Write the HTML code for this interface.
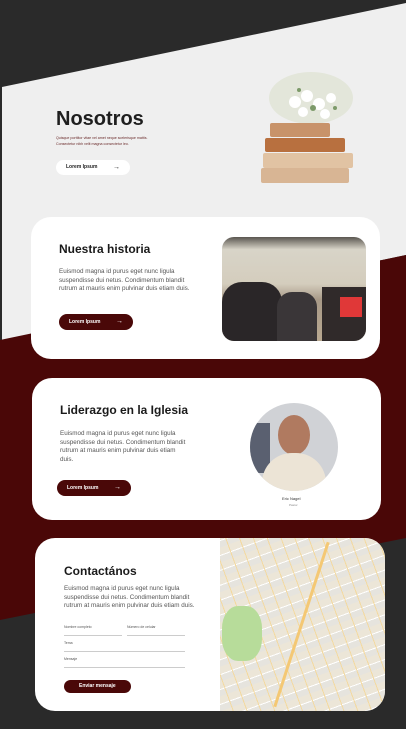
<!DOCTYPE html>
<html><head><meta charset="utf-8"><style>
*{margin:0;padding:0;box-sizing:border-box}
body{width:406px;height:729px;position:relative;overflow:hidden;font-family:"Liberation Sans",sans-serif;background:#2a2a2a}
.abs{position:absolute}
.card{position:absolute;background:#fff;border-radius:20px;overflow:hidden}
h2{font-size:12px;font-weight:bold;color:#1a1a1a}
.p{font-size:6.3px;line-height:8.5px;color:#555}
.btn{position:absolute;height:16px;border-radius:8px;background:#4a0808;color:#fff;font-size:5px;font-weight:bold;line-height:16px;padding-left:10px}
.btn span{position:absolute;right:10px;font-size:7px;top:0}
.field{position:absolute;border-bottom:1px solid #ccc;font-size:3.5px;color:#555;height:11px}
</style></head><body>
<svg class="abs" style="left:0;top:0" width="406" height="729">
<polygon points="0,0 406,0 406,620 0,729" fill="#2a2a2a"/>
<polygon points="2,87 406,3 406,255 2,340" fill="#efefef"/>
<polygon points="0,340 406,255 406,538 0,620" fill="#4a0707"/>
</svg>
<div class="abs" style="left:56px;top:108px;font-size:20px;font-weight:bold;color:#1e1e1e">Nosotros</div>
<div class="abs" style="left:56px;top:136px;font-size:3.6px;line-height:5.5px;color:#6a2a2a">Quisque porttitor vitae vel amet neque scelerisque mattis.<br>Consectetur nibh velit magna consectetur leo.</div>
<div class="abs" style="left:56px;top:160px;width:74px;height:15px;border-radius:8px;background:#fff;font-size:5px;font-weight:bold;line-height:15px;padding-left:10px;color:#222">Lorem Ipsum<span style="position:absolute;right:10px;font-size:7px">→</span></div>
<svg class="abs" style="left:255px;top:60px" width="112" height="135">
<ellipse cx="56" cy="38" rx="42" ry="26" fill="#e3e6da"/>
<g fill="#fff"><circle cx="40" cy="42" r="6"/><circle cx="52" cy="36" r="6"/><circle cx="64" cy="44" r="6"/><circle cx="76" cy="38" r="5"/><circle cx="48" cy="52" r="5"/><circle cx="70" cy="54" r="5"/></g>
<g fill="#7d9a6a"><circle cx="58" cy="48" r="3"/><circle cx="44" cy="30" r="2"/><circle cx="80" cy="48" r="2"/></g>
<rect x="15" y="63" width="60" height="14" rx="2" fill="#c8936a"/>
<rect x="10" y="78" width="80" height="14" rx="2" fill="#b8703f"/>
<rect x="8" y="93" width="90" height="15" rx="2" fill="#e1c3a3"/>
<rect x="6" y="108" width="88" height="15" rx="2" fill="#d8b594"/>
</svg>
<div class="card" style="left:31px;top:217px;width:349px;height:142px">
<h2 class="abs" style="left:28px;top:25px">Nuestra historia</h2>
<div class="abs p" style="left:28px;top:51px">Euismod magna id purus eget nunc ligula<br>suspendisse dui netus. Condimentum blandit<br>rutrum at mauris enim pulvinar duis etiam duis.</div>
<div class="btn" style="left:28px;top:97px;width:74px">Lorem Ipsum<span>→</span></div>
<div class="abs" style="left:191px;top:20px;width:144px;height:104px;border-radius:12px;overflow:hidden;background:linear-gradient(180deg,#5a5650 0%,#d8d4c8 12%,#d4cdbd 45%,#a89a88 60%,#b8a890 100%)">
<div class="abs" style="left:0;top:45px;width:60px;height:59px;background:#2a2628;border-radius:20px 20px 0 0"></div>
<div class="abs" style="left:55px;top:55px;width:40px;height:49px;background:#3a3638;border-radius:15px 15px 0 0"></div>
<div class="abs" style="left:100px;top:50px;width:44px;height:54px;background:#302a2a"></div>
<div class="abs" style="left:118px;top:60px;width:22px;height:20px;background:#e03838"></div>
</div>
</div>
<div class="card" style="left:32px;top:378px;width:349px;height:142px">
<h2 class="abs" style="left:28px;top:25px">Liderazgo en la Iglesia</h2>
<div class="abs p" style="left:28px;top:52px">Euismod magna id purus eget nunc ligula<br>suspendisse dui netus. Condimentum blandit<br>rutrum at mauris enim pulvinar duis etiam<br>duis.</div>
<div class="btn" style="left:25px;top:102px;width:74px">Lorem Ipsum<span>→</span></div>
<div class="abs" style="left:218px;top:25px;width:88px;height:88px;border-radius:50%;overflow:hidden;background:#d0d2d6">
<div class="abs" style="left:0;top:20px;width:20px;height:50px;background:#5a6070"></div>
<div class="abs" style="left:28px;top:12px;width:32px;height:40px;border-radius:50%;background:#b07a60"></div>
<div class="abs" style="left:12px;top:50px;width:64px;height:50px;border-radius:30px 30px 0 0;background:#ece4d6"></div>
</div>
<div class="abs" style="left:250px;top:118px;font-size:4px;color:#333">Eric Nagel</div>
<div class="abs" style="left:257px;top:125px;font-size:3px;color:#888">Pastor</div>
</div>
<div class="card" style="left:35px;top:538px;width:350px;height:173px">
<h2 class="abs" style="left:29px;top:26px">Contactános</h2>
<div class="abs p" style="left:29px;top:47px">Euismod magna id purus eget nunc ligula<br>suspendisse dui netus. Condimentum blandit<br>rutrum at mauris enim pulvinar duis etiam duis.</div>
<div class="field" style="left:29px;top:87px;width:58px">Nombre completo</div>
<div class="field" style="left:92px;top:87px;width:58px">Número de celular</div>
<div class="field" style="left:29px;top:103px;width:121px">Tema</div>
<div class="field" style="left:29px;top:119px;width:121px">Mensaje</div>
<div class="btn" style="left:29px;top:142px;width:67px;height:13px;line-height:13px;padding-left:15px">Enviar mensaje</div>
<div class="abs" style="left:185px;top:0;width:165px;height:173px;background:repeating-linear-gradient(70deg,transparent 0 12px,#f3d9a0 12px 13px),repeating-linear-gradient(-20deg,#e6e4de 0 6px,#fff 6px 7px,#ece6d8 7px 14px)">
<div class="abs" style="left:2px;top:68px;width:40px;height:55px;border-radius:40%;background:#b7dc9a"></div>
<div class="abs" style="left:80px;top:0;width:3px;height:173px;background:#f4c874;transform:rotate(18deg)"></div></div>
</div>
</body></html>
